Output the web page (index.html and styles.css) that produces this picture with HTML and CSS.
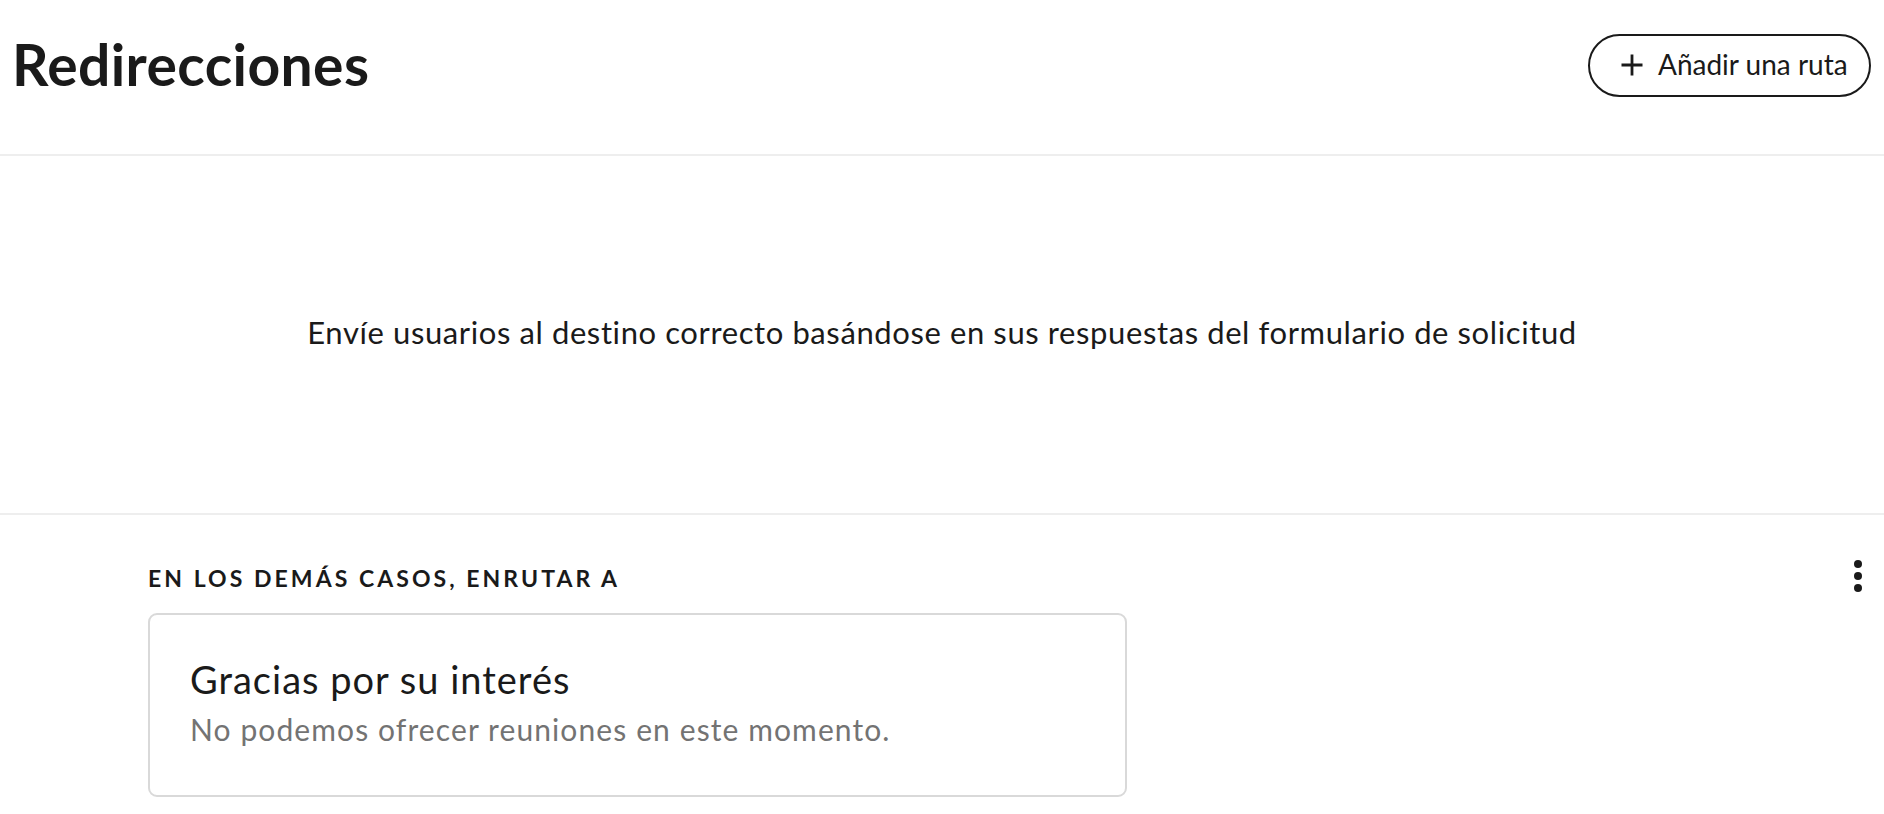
FILE: index.html
```html
<!DOCTYPE html>
<html lang="es">
<head>
<meta charset="utf-8">
<title>Redirecciones</title>
<link rel="stylesheet" href="styles.css">
</head>
<body>
<header class="page-header">
  <h1 class="page-title">Redirecciones</h1>
  <button class="add-route" type="button">
    <svg class="add-route__icon" viewBox="0 0 22 22" width="22" height="22" aria-hidden="true">
      <path d="M11 0.5V21.5M0.5 11H21.5" stroke="#1a1a1a" stroke-width="2.8" fill="none"/>
    </svg>
    <span class="add-route__label">Añadir una ruta</span>
  </button>
</header>
<section class="empty-state">
  <p class="empty-state__text">Envíe usuarios al destino correcto basándose en sus respuestas del formulario de solicitud</p>
</section>
<section class="fallback">
  <div class="fallback__body">
    <h2 class="fallback__label">EN LOS DEMÁS CASOS, ENRUTAR A</h2>
    <div class="fallback__card">
      <div class="fallback__title">Gracias por su interés</div>
      <div class="fallback__subtitle">No podemos ofrecer reuniones en este momento.</div>
    </div>
  </div>
  <button class="kebab" type="button" aria-label="Más opciones">
    <span class="kebab__dot"></span>
    <span class="kebab__dot"></span>
    <span class="kebab__dot"></span>
  </button>
</section>
</body>
</html>
```
FILE: styles.css
```css
html, body {
  margin: 0;
  padding: 0;
  background: #ffffff;
}

body {
  font-family: Lato, "Open Sans", "Liberation Sans", sans-serif;
  color: #1a1a1a;
}

.page-header {
  display: flex;
  justify-content: space-between;
  align-items: center;
  padding: 34px 13px 57px 12px;
  border-bottom: 2px solid #eeeeee;
}

.page-title {
  margin: 0 0 3px 0;
  font-size: 57px;
  font-weight: 700;
  line-height: 60px;
  letter-spacing: 0.4px;
  color: #1a1a1a;
}

.add-route {
  display: flex;
  align-items: center;
  gap: 15px;
  height: 63px;
  width: 283px;
  box-sizing: border-box;
  padding: 0 0 0 31px;
  border: 2px solid #1a1a1a;
  border-radius: 32px;
  background: #ffffff;
  font-family: inherit;
  font-size: 28px;
  color: #1a1a1a;
  cursor: pointer;
}

.add-route__icon {
  flex: none;
  margin-bottom: 2px;
}

.add-route__label {
  padding-bottom: 3px;
}

.empty-state {
  height: 357px;
  display: flex;
  align-items: center;
  justify-content: center;
  border-bottom: 2px solid #eeeeee;
}

.empty-state__text {
  margin: 0 0 6px 0;
  font-size: 31px;
  letter-spacing: 0.6px;
  color: #1a1a1a;
}

.fallback {
  display: flex;
  justify-content: space-between;
  padding: 48px 14px 0 148px;
}

.fallback__body {
  display: flex;
  flex-direction: column;
  gap: 20px;
}

.fallback__label {
  margin: 0;
  font-size: 23px;
  font-weight: 700;
  letter-spacing: 3.05px;
  line-height: 30px;
  color: #1a1a1a;
}

.fallback__card {
  width: 979px;
  height: 184px;
  box-sizing: border-box;
  border: 2px solid #d9d9d9;
  border-radius: 9px;
  padding: 41px 40px 0 40px;
  display: flex;
  flex-direction: column;
  gap: 10px;
}

.fallback__title {
  font-size: 38px;
  line-height: 46px;
  letter-spacing: 1px;
  color: #1a1a1a;
}

.fallback__subtitle {
  font-size: 30px;
  line-height: 34px;
  letter-spacing: 1.1px;
  color: #737373;
}

.kebab {
  display: flex;
  flex-direction: column;
  gap: 4px;
  align-items: center;
  padding: 0;
  margin: -3px 0 0 0;
  border: 0;
  background: transparent;
  height: 40px;
  width: 24px;
  cursor: pointer;
}

.kebab__dot {
  width: 8px;
  height: 8px;
  border-radius: 50%;
  background: #1a1a1a;
}
```
